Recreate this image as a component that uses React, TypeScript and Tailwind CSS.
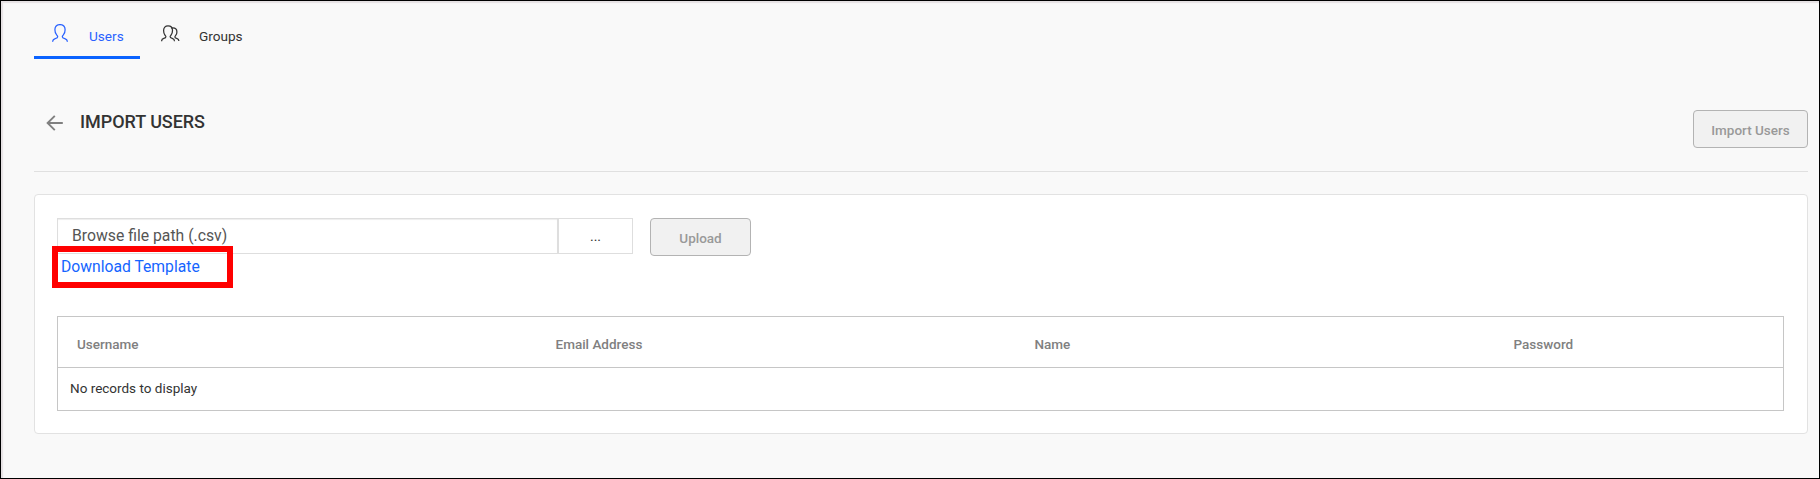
import React from "react";

const columns = ["Username", "Email Address", "Name", "Password"];

function UserIcon() {
  return (
    <svg className="block" width="16" height="18" viewBox="0 0 16 18" fill="none" stroke="currentColor" strokeWidth="1.25">
      <path d="M.6 17.8c0-2 .8-2.700 2.600-3.200 1.700-.5 2.500-.9 2.500-1.900 0-.8-.5-1.200-1.200-2C3.300 9.300 2.900 7.700 2.900 5.800 2.900 2.700 4.800.6 8 .6s5.100 2.100 5.100 5.200c0 1.900-.4 3.500-1.600 4.900-.7.800-1.200 1.200-1.200 2 0 1 .8 1.400 2.500 1.900 1.800.5 2.600 1.200 2.600 3.200" />
    </svg>
  );
}

function GroupIcon() {
  return (
    <svg className="block" width="19" height="17" viewBox="0 0 19 17" fill="none" stroke="currentColor" strokeWidth="1.25">
      <path d="M.6 16.200c0-1.700.6-2.300 2.200-2.800 1.500-.4 2.100-.8 2.100-1.700 0-.7-.4-1-1-1.700C3 8.800 2.600 7.300 2.600 5.500 2.600 2.600 4.300.8 7 .8s4.500 1.800 4.500 4.700c0 1.800-.4 3.300-1.400 4.500-.6.700-1 1-1 1.700 0 .9.700 1.300 2.100 1.700 1.600.5 2.300 1.100 2.300 2.800" />
      <path d="M10.200 3.200c.5-.2 1-.3 1.600-.3 2.500 0 4.100 1.500 4.100 4 0 1.500-.4 2.500-1.200 3.500-.5.600-.8.900-.8 1.500 0 .8.500 1.100 1.800 1.500 1.600.5 2.200 1 2.200 2.600" />
    </svg>
  );
}

function BackArrow() {
  return (
    <svg className="block" width="17" height="16" viewBox="0 0 17 16" fill="none" stroke="currentColor" strokeWidth="1.900">
      <path d="M16.800 8H1.700M8.800.8 1.600 8l7.200 7.200" />
    </svg>
  );
}

export default function App() {
  return (
    <div className="relative h-[479px] w-[1820px] overflow-hidden border border-black bg-[#f9f9f9] pr-[11px] pl-[33px] font-[Roboto,sans-serif] text-[#333] shadow-[inset_2px_2px_1px_#e6e2e4]">
      <nav className="flex h-[58px] text-[13.6px] leading-[18px]">
        <a className="flex w-[106px] border-b-[3px] border-[#0b63ff] pt-[23px] pl-[18px] text-[#2962ff]">
          <UserIcon />
          <span className="ml-[21px] pt-[3px]">Users</span>
        </a>
        <a className="flex pt-[23px] pl-[21px]">
          <span className="pt-px"><GroupIcon /></span>
          <span className="ml-[19px] pt-[3px]">Groups</span>
        </a>
      </nav>

      <header className="mt-[51px] flex h-[62px] items-start border-b border-[#e0e0e0] pl-[12px]">
        <span className="pt-[5px] text-[#808080]"><BackArrow /></span>
        <h1 className="ml-[17px] pt-px text-[18px] leading-[21px] font-medium tracking-[-0.05px]">IMPORT USERS</h1>
        <button disabled className="ml-auto h-[38px] w-[115px] rounded-[4px] border border-[#b3b3b3] bg-[#f1f1f1] pt-[3px] text-[13.5px] font-medium text-[#999]">
          Import Users
        </button>
      </header>

      <main className="mt-[22px] h-[240px] rounded-[4px] border border-[#e2e2e2] bg-white pt-[23px] pr-[23px] pl-[22px]">
        <div className="flex h-[38px] items-start">
          <div className="flex h-[36px] w-[501px] items-center border border-[#dedede] pl-[14px] text-[15.75px] text-[#555] shadow-[inset_0_1px_1px_#eee]">
            Browse file path (.csv)
          </div>
          <button className="h-[36px] w-[75px] border border-[#dedede] text-[14px]">...</button>
          <button disabled className="ml-[17px] h-[38px] w-[101px] rounded-[4px] border border-[#b3b3b3] bg-[#f1f1f1] pt-[3px] text-[13.5px] font-medium text-[#999]">
            Upload
          </button>
        </div>
        <a className="block h-[60px] pt-px pl-[4px] text-[15.7px] leading-[20px] text-[#1565ff]">Download Template</a>
        <table className="w-[1727px] table-fixed border-collapse text-left text-[13.5px] leading-[16px]">
          <colgroup>
            <col className="w-[479px]" />
            <col className="w-[479px]" />
            <col className="w-[479px]" />
            <col />
          </colgroup>
          <thead>
            <tr className="h-[51px] border border-[#c6c6c6]">
              {columns.map((name) => (
                <th key={name} className="pt-[4px] pl-[19px] font-medium text-[#808080]">{name}</th>
              ))}
            </tr>
          </thead>
          <tbody>
            <tr className="h-[43px] border border-[#c6c6c6]">
              <td colSpan={4} className="pb-[2px] pl-[12px]">No records to display</td>
            </tr>
          </tbody>
        </table>
      </main>

      <div className="pointer-events-none absolute top-[245px] left-[51px] h-[42px] w-[181px] border-[6px] border-[#ff0000]" />
    </div>
  );
}
